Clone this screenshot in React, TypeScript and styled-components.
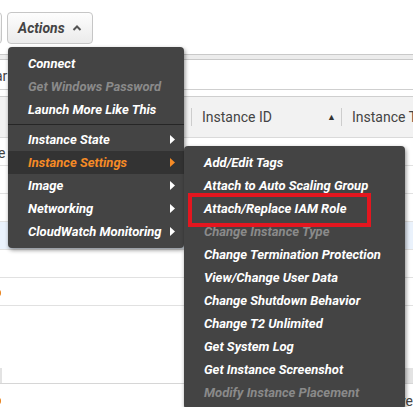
import React from "react";
import styled, { createGlobalStyle } from "styled-components";

const Global = createGlobalStyle`
  html, body { margin: 0; padding: 0; background: #fff; }
  body { font-family: Roboto, "Liberation Sans", Arial, sans-serif; overflow: hidden; }
  #root { width: 413px; height: 407px; }
`;

const Page = styled.div`
  position: relative;
  width: 413px;
  height: 407px;
  overflow: hidden;
  background: #fff;
`;

const Toolbar = styled.div`
  height: 54px;
  box-sizing: border-box;
  padding-top: 12px;
  display: flex;
  align-items: flex-start;
  gap: 5px;
`;

const ToolButton = styled.button<{ $ghost?: boolean }>`
  height: 32px;
  box-sizing: border-box;
  margin: 0;
  margin-left: ${(p) => (p.$ghost ? "-38px" : "0")};
  width: ${(p) => (p.$ghost ? "40px" : "86px")};
  border: 1px solid #c6c6c6;
  border-radius: 4px;
  background: linear-gradient(#fdfdfd, #ebebeb);
  display: flex;
  align-items: center;
  gap: 7px;
  padding: 0 0 0 10px;
  font-family: Roboto, "Liberation Sans", Arial, sans-serif;
  font-size: 14px;
  font-weight: 700;
  font-style: italic;
  color: #444;
`;

const FilterBand = styled.div`
  height: 6px;
  box-sizing: border-box;
  background: #ececec;
  border-top: 1px solid #c9c9c9;
  border-bottom: 1px solid #c9c9c9;
`;

const SearchRow = styled.div`
  height: 30px;
  box-sizing: border-box;
  padding-top: 3px;
  border-bottom: 1px solid #cfcfcf;
  display: flex;
  align-items: center;
  font-size: 14px;
  color: #444;
  margin-bottom: 6px;
`;

const Clipped = styled.span<{ $shift: number }>`
  margin-left: ${(p) => p.$shift}px;
  white-space: nowrap;
`;

const Header = styled.div`
  height: 42px;
  box-sizing: border-box;
  background: #f2f2f2;
  border-top: 1px solid #cfcfcf;
  border-bottom: 1px solid #dadada;
  display: grid;
  grid-template-columns: 191px 150px 1fr;
  align-items: center;
`;

const HeadCell = styled.div<{ $divider?: boolean }>`
  position: relative;
  height: 100%;
  display: flex;
  align-items: center;
  padding-left: ${(p) => (p.$divider ? "11px" : "0")};
  font-size: 14px;
  color: #444;
  white-space: nowrap;
  overflow: hidden;
  ${(p) =>
    p.$divider
      ? `&::before{content:"";position:absolute;left:0;top:11px;bottom:11px;width:1px;background:#cdcdcd;}`
      : ""}
`;

const SortCaret = styled.span`
  margin-left: auto;
  margin-right: 5px;
  font-size: 9px;
  color: #333;
`;

const Row = styled.div<{ $selected?: boolean }>`
  height: 28px;
  box-sizing: border-box;
  padding-top: 2px;
  border-bottom: 1px solid #e1e1e1;
  background: ${(p) => (p.$selected ? "#eaf2fc" : "#fff")};
  display: flex;
  align-items: center;
  font-size: 14px;
  color: #444;
`;

const StatusDot = styled.span`
  display: inline-block;
  width: 8px;
  height: 8px;
  border-radius: 50%;
  background: #e8811a;
  margin-left: -7px;
`;

const EmptyArea = styled.div`
  height: 62px;
`;

const SplitBar = styled.div`
  height: 16px;
  box-sizing: border-box;
  border-bottom: 1px solid #d6d6d6;
  display: flex;
  justify-content: space-between;
`;

const SplitEdge = styled.span<{ $w: number }>`
  width: ${(p) => p.$w}px;
  background: #e3e3e3;
`;

const BottomRow = styled.div`
  height: 23px;
  box-sizing: border-box;
  padding-top: 10px;
  display: flex;
  align-items: center;
  justify-content: space-between;
  font-size: 14px;
  color: #444;
`;

const Menu = styled.div<{ $top: number; $left: number; $width: number }>`
  position: absolute;
  top: ${(p) => p.$top}px;
  left: ${(p) => p.$left}px;
  width: ${(p) => p.$width}px;
  background: #444;
  border-radius: 4px;
  padding: 5px 0;
  box-shadow: 1px 2px 4px rgba(0, 0, 0, 0.45);
  z-index: 2;
`;

type ItemState = "normal" | "disabled" | "active";

const Item = styled.div<{ $state?: ItemState }>`
  height: 23px;
  display: flex;
  align-items: center;
  justify-content: space-between;
  padding: 0 9px 0 20px;
  font-size: 13px;
  font-weight: 700;
  font-style: italic;
  white-space: nowrap;
  color: ${(p) =>
    p.$state === "disabled" ? "#8a8a8a" : p.$state === "active" ? "#f68b26" : "#fff"};
  background: ${(p) => (p.$state === "active" ? "#333" : "transparent")};
`;

const Separator = styled.div`
  height: 1px;
  margin: 3px 0;
  background: #262626;
`;

const Callout = styled.div`
  position: absolute;
  top: 193px;
  left: 188px;
  width: 183px;
  height: 34px;
  box-sizing: border-box;
  border: 4px solid #e4161f;
  z-index: 4;
`;

const Caret = () => (
  <svg width="10" height="6" viewBox="0 0 10 6">
    <polyline points="1.5,5 5,1.5 8.5,5" fill="none" stroke="#555" strokeWidth="2" />
  </svg>
);

const Arrow = ({ color }: { color: string }) => (
  <svg width="5" height="9" viewBox="0 0 5 9">
    <polygon points="0,0 5,4.5 0,9" fill={color} />
  </svg>
);

const mainItems: { label: string; state?: ItemState }[] = [
  { label: "Connect" },
  { label: "Get Windows Password", state: "disabled" },
  { label: "Launch More Like This" },
];

const groupItems: { label: string; state?: ItemState }[] = [
  { label: "Instance State" },
  { label: "Instance Settings", state: "active" },
  { label: "Image" },
  { label: "Networking" },
  { label: "CloudWatch Monitoring" },
];

const subItems: { label: string; state?: ItemState }[] = [
  { label: "Add/Edit Tags" },
  { label: "Attach to Auto Scaling Group" },
  { label: "Attach/Replace IAM Role" },
  { label: "Change Instance Type", state: "disabled" },
  { label: "Change Termination Protection" },
  { label: "View/Change User Data" },
  { label: "Change Shutdown Behavior" },
  { label: "Change T2 Unlimited" },
  { label: "Get System Log" },
  { label: "Get Instance Screenshot" },
  { label: "Modify Instance Placement", state: "disabled" },
];

export default function App() {
  return (
    <Page>
      <Global />
      <Toolbar>
        <ToolButton $ghost />
        <ToolButton>
          Actions
          <Caret />
        </ToolButton>
      </Toolbar>
      <FilterBand />
      <SearchRow>
        <Clipped $shift={-5}>ar</Clipped>
      </SearchRow>
      <Header>
        <HeadCell />
        <HeadCell $divider>
          Instance ID
          <SortCaret>▲</SortCaret>
        </HeadCell>
        <HeadCell $divider>Instance Type</HeadCell>
      </Header>
      <Row>
        <Clipped $shift={-2}>e</Clipped>
      </Row>
      <Row />
      <Row />
      <Row $selected />
      <Row />
      <Row>
        <StatusDot />
      </Row>
      <EmptyArea />
      <SplitBar>
        <SplitEdge $w={2} />
        <SplitEdge $w={8} />
      </SplitBar>
      <BottomRow>
        <StatusDot />
        <Clipped $shift={0}>ve</Clipped>
      </BottomRow>

      <Menu $top={47} $left={8} $width={176}>
        {mainItems.map((it) => (
          <Item key={it.label} $state={it.state}>
            {it.label}
          </Item>
        ))}
        <Separator />
        {groupItems.map((it) => (
          <Item key={it.label} $state={it.state}>
            {it.label}
            <Arrow color={it.state === "active" ? "#f68b26" : "#fff"} />
          </Item>
        ))}
      </Menu>

      <Menu $top={146} $left={184} $width={221}>
        {subItems.map((it) => (
          <Item key={it.label} $state={it.state}>
            {it.label}
          </Item>
        ))}
      </Menu>

      <Callout />
    </Page>
  );
}
